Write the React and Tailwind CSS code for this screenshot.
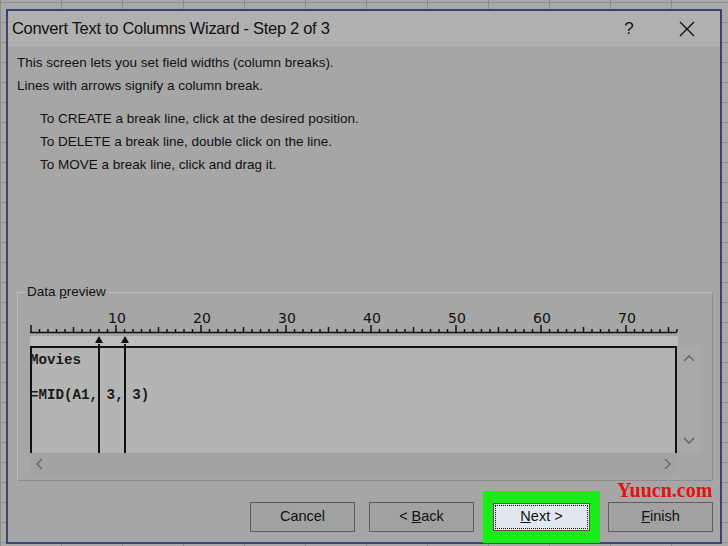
import React from 'react'

/* ─── Ruler ───────────────────────────────────────────────────────────── */
const CH = 8.5

function Ruler() {
  const ticks = []
  for (let i = 0; i <= 76; i++) {
    const x = i * CH + 1
    const h = i % 10 === 0 ? 7 : i % 5 === 0 ? 5 : 3
    ticks.push(<line key={i} x1={x} x2={x} y1={22 - h} y2={22} stroke="#111" strokeWidth="1.5" />)
  }
  const labels = [10, 20, 30, 40, 50, 60, 70]
  return (
    <svg width="650" height="26" className="block">
      {labels.map((n) => (
        <text key={n} x={n * CH + 2} y="13" textAnchor="middle" fontSize="14" fontFamily="'DejaVu Sans', sans-serif" fill="#111">{n}</text>
      ))}
      <line x1="0" x2="647" y1="22.5" y2="22.5" stroke="#111" strokeWidth="1.5" />
      {ticks}
    </svg>
  )
}

function BreakLine({ pos }) {
  return (
    <div className="absolute top-[26px] w-[8px]" style={{ left: pos * CH - 3 }}>
      <svg width="8" height="8" className="block">
        <path d="M4 0 L8 7 L0 7 Z" fill="#111" />
      </svg>
      <div className="mx-auto w-[2px] h-[109px] bg-[#111]" />
    </div>
  )
}

function Chevron({ dir }) {
  const d = {
    up: 'M2 9 L7 4 L12 9',
    down: 'M2 5 L7 10 L12 5',
    left: 'M9 2 L4 7 L9 12',
    right: 'M5 2 L10 7 L5 12',
  }[dir]
  return (
    <svg width="14" height="14" className="block">
      <path d={d} fill="none" stroke="#6a6a6a" strokeWidth="1.6" />
    </svg>
  )
}

function Btn({ children, className = '' }) {
  return (
    <div className={`w-[105px] h-[30px] flex items-center justify-center border border-[#5e5e5e] bg-[#a1a1a1] text-[14.5px] text-[#111] ${className}`}>
      {children}
    </div>
  )
}

/* ─── App ─────────────────────────────────────────────────────────────── */
export default function App() {
  return (
    <div
      className="relative w-[728px] h-[546px] overflow-hidden bg-[#a9a9a9] bg-[linear-gradient(to_right,#8c8c8c_1px,transparent_1px),linear-gradient(to_bottom,#8c8c8c_1px,transparent_1px)] bg-[size:61px_20px] bg-[position:0px_2px]"
      style={{ fontFamily: "'Liberation Sans', Arial, sans-serif" }}
    >
      {/* dialog window */}
      <div className="absolute left-[6px] top-[9px] w-[716px] h-[535px] border-2 border-[#3d4270] bg-[#a6a6a6] flex flex-col">
        {/* title bar */}
        <div className="h-[35px] shrink-0 bg-[#b0b0b0] flex items-center pl-[4px] text-[16.5px] text-[#111]">
          <span className="flex-1 tracking-[-0.3px]">Convert Text to Columns Wizard - Step 2 of 3</span>
          <span className="w-[30px] text-center text-[17px] mr-[35px]">?</span>
          <svg width="16" height="16" className="mr-[25px]">
            <path d="M1 1 L15 15 M15 1 L1 15" stroke="#111" strokeWidth="1.4" />
          </svg>
        </div>

        {/* intro text */}
        <div className="pl-[9px] pt-[5px] text-[13.5px] text-[#111] leading-[23px] shrink-0">
          <p>This screen lets you set field widths (column breaks).</p>
          <p>Lines with arrows signify a column break.</p>
          <div className="pl-[23px] mt-[10px]">
            <p>To CREATE a break line, click at the desired position.</p>
            <p>To DELETE a break line, double click on the line.</p>
            <p>To MOVE a break line, click and drag it.</p>
          </div>
        </div>

        {/* data preview group */}
        <div className="relative shrink-0 ml-[9px] mt-[116px] w-[696px] h-[189px] border border-[#8d8d8d] border-t-[#bdbdbd] border-l-[#bdbdbd]">
          <span className="absolute left-[7px] top-[-10px] px-[2px] bg-[#a6a6a6] text-[13.5px] leading-[18px] text-[#111]">
            Data <u>p</u>review
          </span>
          <div className="relative ml-[12px] mt-[17px]">
            <Ruler />
            <div className="h-[10px] bg-[#bdbdbd] w-[648px]" />
            <div className="flex">
              <div className="w-[647px] h-[107px] bg-[#b4b4b4] border-t-2 border-l-2 border-r-2 border-[#111] font-bold text-[14.2px] text-[#1a1a1a] leading-[18px] pt-[3px] pl-0" style={{ fontFamily: "'Liberation Mono', 'Courier New', monospace" }}>
                <p className="-ml-[2px]">Movies</p>
                <p className="-ml-[2px] mt-[17px]">=MID(A1, 3, 3)</p>
              </div>
              <div className="w-[24px] h-[107px] bg-[#a9a9a9] flex flex-col items-center justify-between py-[6px]">
                <Chevron dir="up" />
                <Chevron dir="down" />
              </div>
            </div>
            <div className="w-[647px] h-[22px] bg-[#a3a3a3] flex items-center justify-between px-[3px]">
              <Chevron dir="left" />
              <Chevron dir="right" />
            </div>
            <BreakLine pos={8} />
            <BreakLine pos={11} />
          </div>
        </div>

        {/* buttons */}
        <div className="relative shrink-0 flex items-center mt-[10px] h-[52px] pl-[242px]">
          <Btn>Cancel</Btn>
          <Btn className="ml-[14px]">&lt; <u className="ml-[4px]">B</u>ack</Btn>
          <div className="ml-[9px] w-[117px] h-[52px] bg-[#19ec19] flex items-center justify-center">
            <div className="w-[97px] h-[28px] bg-[#e2e8ef] border border-[#555] p-[1px]">
              <div className="w-full h-full border border-dotted border-[#111] flex items-center justify-center text-[14.5px] text-[#111]">
                <u>N</u>ext &gt;
              </div>
            </div>
          </div>
          <Btn className="ml-[8px]"><u>F</u>inish</Btn>
          <span className="absolute left-[609px] top-[-12px] text-[20px] leading-[23px] font-bold text-[#e31212]" style={{ fontFamily: "'Liberation Serif', serif" }}>Yuucn.com</span>
        </div>
      </div>
    </div>
  )
}
